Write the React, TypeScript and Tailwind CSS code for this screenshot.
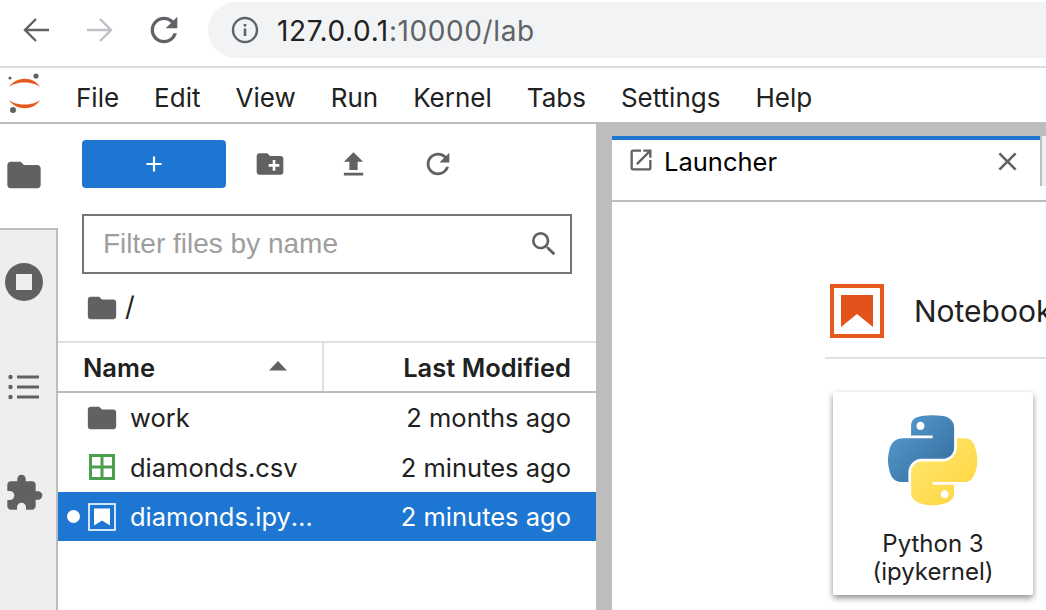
import React from 'react';
import { MdFolder, MdCreateNewFolder, MdFileUpload, MdRefresh, MdSearch, MdOpenInNew, MdExtension, MdClose, MdAdd } from 'react-icons/md';

const menus = ['File', 'Edit', 'View', 'Run', 'Kernel', 'Tabs', 'Settings', 'Help'];

function JupyterLogo() {
  return (
    <svg width="36" height="44" viewBox="0 0 36 44" className="ml-[7px]">
      <path d="M2 14 C9 3 27 3 33 14 C26 8 9 8 2 14 Z" fill="#e65a1e" />
      <path d="M2 27 C9 38 27 38 33 27 C26 33 9 33 2 27 Z" fill="#e65a1e" />
      <circle cx="29" cy="3" r="2.6" fill="#616161" />
      <circle cx="3" cy="5" r="1.6" fill="#616161" />
      <circle cx="6" cy="37" r="3" fill="#616161" />
    </svg>
  );
}

function PythonLogo() {
  return (
    <svg width="90" height="92" viewBox="0 0 112 114">
      <defs>
        <linearGradient id="pyBlue" x1="0" y1="0" x2="1" y2="1">
          <stop offset="0" stopColor="#5a9fd4" />
          <stop offset="1" stopColor="#306998" />
        </linearGradient>
        <linearGradient id="pyYellow" x1="0" y1="0" x2="1" y2="1">
          <stop offset="0" stopColor="#ffe873" />
          <stop offset="1" stopColor="#ffd43b" />
        </linearGradient>
      </defs>
      <path
        fill="url(#pyBlue)"
        fillRule="evenodd"
        d="M54.9 0C50.3 0 46 .4 42.1 1.1 30.8 3.1 28.7 7.3 28.7 15V25.300H55.500V28.700H18.600C10.800 28.700 4 33.300 1.900 42.300-.6 52.500-.7 58.800 1.900 69.500 3.800 77.400 8.300 83.100 16.100 83.100H25.400V70.800C25.400 62 33 54.200 42.100 54.200H68.900C76.300 54.200 82.300 48 82.300 40.600V15C82.300 7.800 76.200 2.300 68.900 1.100 64.300.3 59.500 0 54.900 0ZM40.400 8.200C43.200 8.200 45.400 10.500 45.400 13.300 45.400 16.200 43.200 18.400 40.400 18.400 37.600 18.400 35.400 16.200 35.400 13.300 35.400 10.500 37.600 8.200 40.400 8.200Z"
      />
      <path
        fill="url(#pyYellow)"
        fillRule="evenodd"
        d="M85.600 28.700V40.600C85.600 49.800 77.800 57.600 68.900 57.600H42.100C34.800 57.600 28.700 63.800 28.700 71.200V96.700C28.700 104 35 108.300 42.100 110.300 50.600 112.800 58.700 113.300 68.900 110.300 75.600 108.400 82.300 104.500 82.300 96.700V86.500H55.500V83.100H95.700C103.500 83.100 106.400 77.700 109.100 69.500 111.900 61.100 111.800 53 109.100 42.300 107.200 34.500 103.500 28.700 95.700 28.700ZM70.600 93.300C73.400 93.300 75.600 95.600 75.600 98.400 75.600 101.200 73.400 103.500 70.600 103.500 67.800 103.500 65.500 101.200 65.500 98.400 65.500 95.600 67.800 93.300 70.600 93.300Z"
      />
    </svg>
  );
}

function NotebookIcon({ color, fill }: { color: string; fill: string }) {
  return (
    <svg width="28" height="28" viewBox="0 0 28 28" className="shrink-0">
      <rect x="1" y="1" width="26" height="26" fill={fill} stroke={color} strokeWidth="1.6" />
      <path d="M6 5.500H22V22.500L14 17.500L6 22.500Z" fill={color} />
    </svg>
  );
}

function CsvIcon() {
  return (
    <svg width="28" height="28" viewBox="0 0 28 28" className="shrink-0">
      <path d="M2.500 2.500H25.500V25.500H2.500Z M14 2.500V25.500 M2.500 14H25.500" fill="none" stroke="#4a9f4e" strokeWidth="3" />
    </svg>
  );
}

function Row({ name, date, icon, active }: { name: string; date: string; icon: React.ReactNode; active?: boolean }) {
  return (
    <div className={`flex items-center pr-[25px] ${active ? 'h-[49px] bg-[#1d76d2] text-white' : 'h-[49.500px] text-[#212121]'}`}>
      <div className="flex w-[30px] shrink-0 justify-end pr-[8px]">
        {active && <div className="h-[13px] w-[13px] rounded-full bg-white" />}
      </div>
      {icon}
      <div className="ml-[14px] w-[183px] truncate pt-[1px]">{name}</div>
      <div className="flex-1 pt-[1px] text-right">{date}</div>
    </div>
  );
}

export default function App() {
  return (
    <div className="flex h-[610px] w-[1046px] flex-col overflow-hidden bg-white font-['Inter',sans-serif] text-[#212121]">
      {/* browser bar */}
      <div className="flex h-[66px] shrink-0 items-start pt-[2px]">
        <div className="flex h-[56px] w-[208px] shrink-0 items-center pl-[23px]">
          <svg width="26" height="26" viewBox="0 0 26 26" fill="none" stroke="#5f6368" strokeWidth="2.4">
            <path d="M26 13H2 M13 2L2 13L13 24" />
          </svg>
          <svg width="26" height="26" viewBox="0 0 26 26" fill="none" stroke="#bdc1c6" strokeWidth="2.4" className="ml-[38px]">
            <path d="M0 13H24 M13 2L24 13L13 24" />
          </svg>
          <MdRefresh size={40} className="ml-[31px] shrink-0 text-[#5f6368]" />
        </div>
        <div className="flex h-[56px] flex-1 items-center rounded-l-[28px] bg-[#f1f3f4] pl-[23px] text-[28px] tracking-[0.6px]">
          <svg width="28" height="28" viewBox="0 0 28 28" fill="none" className="shrink-0">
            <circle cx="14" cy="14" r="12" stroke="#5f6368" strokeWidth="2.4" />
            <path d="M14 12.500V20 M14 8V10.500" stroke="#5f6368" strokeWidth="2.6" />
          </svg>
          <span className="ml-[18px] pt-[2px]">127.0.0.1</span>
          <span className="pt-[2px] text-[#5f6368]">:10000/lab</span>
        </div>
      </div>

      {/* menu bar */}
      <div className="flex h-[58px] shrink-0 items-center border-y-2 border-t-[#dcdcdc] border-b-[#bdbdbd]">
        <div className="w-[76px] shrink-0">
          <JupyterLogo />
        </div>
        <div className="flex gap-[35px] pt-[4px] text-[26px]">
          {menus.map((m) => (
            <span key={m}>{m}</span>
          ))}
        </div>
      </div>

      <div className="flex min-h-0 flex-1">
        {/* left side tabs */}
        <div className="flex w-[58px] shrink-0 flex-col text-[#616161]">
          <div className="flex h-[104px] items-start pl-[4px] pt-[31px]">
            <MdFolder size={40} />
          </div>
          <div className="flex flex-1 flex-col border-t-2 border-r-2 border-[#bdbdbd] bg-[#eeeeee]">
            <div className="flex h-[103px] items-center pl-[5px]">
              <svg width="38" height="38" viewBox="0 0 38 38">
                <circle cx="19" cy="19" r="19" fill="#616161" />
                <rect x="11" y="11" width="16" height="16" fill="#eeeeee" />
              </svg>
            </div>
            <div className="flex h-[107px] items-center pl-[8px]">
              <svg width="32" height="26" viewBox="0 0 32 26">
                <circle cx="2.500" cy="3" r="2.200" fill="#616161" />
                <circle cx="2.500" cy="13" r="2.200" fill="#616161" />
                <circle cx="2.500" cy="23" r="2.200" fill="#616161" />
                <path d="M9 3H31 M9 13H31 M9 23H31" stroke="#616161" strokeWidth="3" />
              </svg>
            </div>
            <div className="flex h-[105px] items-center pl-[4px]">
              <MdExtension size={40} />
            </div>
          </div>
        </div>

        {/* file browser */}
        <div className="flex w-[538px] shrink-0 flex-col">
          <div className="flex h-[64px] items-end pl-[24px]">
            <div className="flex h-[48px] w-[144px] items-center justify-center rounded-[4px] bg-[#1d76d2] text-white">
              <MdAdd size={26} />
            </div>
            <div className="flex h-[48px] items-center pl-[28px] text-[#616161]">
              <MdCreateNewFolder size={32} />
              <MdFileUpload size={33} className="ml-[51px]" />
              <MdRefresh size={34} className="ml-[51px]" />
            </div>
          </div>
          <div className="ml-[24px] mt-[26px] flex h-[60px] w-[490px] items-center justify-between border-2 border-[#757575] pl-[19px] pr-[10px] font-['Liberation_Sans',sans-serif] text-[28px] text-[#9e9e9e]">
            <span>Filter files by name</span>
            <MdSearch size={32} className="text-[#616161]" />
          </div>
          <div className="flex h-[67px] items-center pl-[27px] text-[27px]">
            <MdFolder size={34} className="text-[#616161]" />
            <span className="ml-[6px]">/</span>
          </div>
          <div className="flex h-[52px] items-center border-y-2 border-t-[#e0e0e0] border-b-[#bdbdbd] text-[25.500px] font-semibold">
            <div className="flex h-full w-[266px] shrink-0 items-center justify-between border-r-2 border-[#e0e0e0] pl-[25px] pr-[35px]">
              <span className="pt-[2px]">Name</span>
              <svg width="18" height="10" viewBox="0 0 18 10" className="mb-[2px]">
                <path d="M9 0L18 9.500H0Z" fill="#616161" />
              </svg>
            </div>
            <div className="flex-1 pr-[25px] pt-[2px] text-right">Last Modified</div>
          </div>
          <div className="text-[25.500px]">
            <Row name="work" date="2 months ago" icon={<MdFolder size={34} className="-ml-[3px] mr-[-3px] shrink-0 text-[#616161]" />} />
            <Row name="diamonds.csv" date="2 minutes ago" icon={<CsvIcon />} />
            <Row name="diamonds.ipynb" date="2 minutes ago" active icon={<NotebookIcon color="#ffffff" fill="#1d76d2" />} />
          </div>
        </div>

        {/* main area */}
        <div className="flex min-w-0 flex-1 flex-col border-l-[16px] border-[#bdbdbd]">
          <div className="flex h-[78px] shrink-0 border-b-2 border-[#bdbdbd] bg-white">
            <div className="flex flex-1 flex-col">
              <div className="h-[12px] shrink-0 bg-[#bdbdbd]" />
              <div className="flex flex-1">
                <div className="flex w-[428px] items-start border-t-4 border-[#1d76d2] pl-[15px] pt-[5px]">
                  <MdOpenInNew size={28} className="mt-[1px] shrink-0 text-[#616161]" />
                  <span className="ml-[9px] pt-[1px] text-[25.500px] leading-[32px] text-black">Launcher</span>
                  <MdClose size={31} className="ml-auto mr-[17px] mt-[1px] text-[#616161]" />
                </div>
                <div className="h-[50px] flex-1 border-l-2 border-[#bdbdbd] bg-[#eeeeee]" />
              </div>
            </div>
          </div>
          <div className="min-h-0 flex-1 pl-[213px] pt-[82px]">
            <div className="w-[400px] border-b-2 border-[#e0e0e0] pb-[19px] pl-[5px]">
              <div className="flex items-center">
                <svg width="54" height="54" viewBox="0 0 54 54" className="shrink-0">
                  <rect x="2" y="2" width="50" height="50" fill="#fff" stroke="#e65a1e" strokeWidth="4" />
                  <path d="M11 11H43V43L27 30L11 43Z" fill="#e4521b" />
                </svg>
                <span className="ml-[30px] whitespace-nowrap text-[30px]">Notebook</span>
              </div>
            </div>
            <div className="ml-[8px] mt-[33px] flex h-[203px] w-[200px] flex-col items-center rounded-[2px] bg-white pt-[23px] shadow-[0_3px_6px_rgba(0,0,0,0.45)]">
              <PythonLogo />
              <div className="mt-[23px] text-center text-[24px] leading-[28px]">
                Python 3
                <br />
                (ipykernel)
              </div>
            </div>
          </div>
        </div>
      </div>
    </div>
  );
}
